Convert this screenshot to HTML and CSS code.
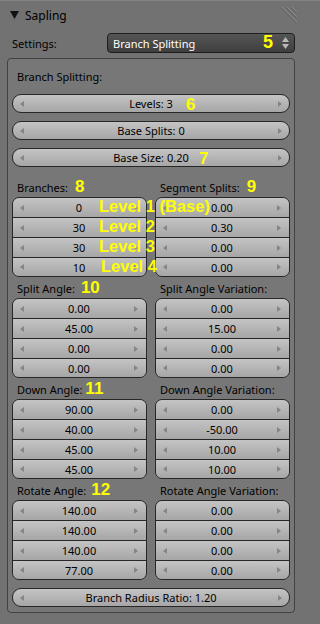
FILE: index.html
```html
<!DOCTYPE html>
<html lang="en">
<head>
    <meta charset="UTF-8">
    <title>Sapling</title>
    <link rel="stylesheet" href="styles.css">
</head>
<body>
<div class="panel">
    <!-- panel header -->
    <div class="head">
        <svg class="tri" viewBox="0 0 9 8"><polygon points="0,0 9,0 4.5,8" fill="#111"/></svg>
        <span class="title">Sapling</span>
        <svg class="grip" viewBox="0 0 16 16">
            <g stroke-width="1">
                <line x1="0" y1="0.5" x2="15.5" y2="16" stroke="#5e5e5e"/>
                <line x1="1" y1="0" x2="16" y2="15" stroke="#8c8c8c"/>
                <line x1="5" y1="0.5" x2="15.5" y2="11" stroke="#5e5e5e"/>
                <line x1="6" y1="0" x2="16" y2="10" stroke="#8c8c8c"/>
                <line x1="10" y1="0.5" x2="15.5" y2="6" stroke="#5e5e5e"/>
                <line x1="11" y1="0" x2="16" y2="5" stroke="#8c8c8c"/>
            </g>
        </svg>
    </div>

    <div class="settings">
        <span class="settings-label">Settings:</span>
        <div class="menu">
            <span>Branch Splitting</span>
            <span class="note note-5">5</span>
            <svg class="updown" viewBox="0 0 7 12">
                <polygon points="0,5 3.5,0 7,5" fill="#b8b8b8"/>
                <polygon points="0,7 3.5,12 7,7" fill="#b8b8b8"/>
            </svg>
        </div>
    </div>

    <div class="box">
        <div class="box-title">Branch Splitting:</div>

        <div class="btn"><i class="arr-l"></i><span class="val">Levels: 3</span><i class="arr-r"></i><span class="note note-6">6</span></div>
        <div class="btn"><i class="arr-l"></i><span class="val">Base Splits: 0</span><i class="arr-r"></i></div>
        <div class="btn"><i class="arr-l"></i><span class="val">Base Size: 0.20</span><i class="arr-r"></i><span class="note note-7">7</span></div>

        <!-- branches / segment splits -->
        <div class="cols first">
            <div class="col">
                <div class="col-label">Branches:<span class="num n8">8</span></div>
                <div class="group">
                    <div class="row"><i class="arr-l"></i><span class="val">0</span><i class="arr-r"></i></div>
                    <div class="row"><i class="arr-l"></i><span class="val">30</span><i class="arr-r"></i></div>
                    <div class="row"><i class="arr-l"></i><span class="val">30</span><i class="arr-r"></i></div>
                    <div class="row"><i class="arr-l"></i><span class="val">10</span><i class="arr-r"></i></div>
                </div>
            </div>
            <div class="col">
                <div class="col-label">Segment Splits:<span class="num n9">9</span></div>
                <div class="group">
                    <div class="row"><i class="arr-l"></i><span class="val">0.00</span><i class="arr-r"></i></div>
                    <div class="row"><i class="arr-l"></i><span class="val">0.30</span><i class="arr-r"></i></div>
                    <div class="row"><i class="arr-l"></i><span class="val">0.00</span><i class="arr-r"></i></div>
                    <div class="row"><i class="arr-l"></i><span class="val">0.00</span><i class="arr-r"></i></div>
                </div>
            </div>
            <div class="levels">Level 1 (Base)<br>Level 2<br>Level 3<br><span class="lv4">Level 4</span></div>
        </div>

        <!-- split angle -->
        <div class="cols">
            <div class="col">
                <div class="col-label">Split Angle:<span class="num n10">10</span></div>
                <div class="group">
                    <div class="row"><i class="arr-l"></i><span class="val">0.00</span><i class="arr-r"></i></div>
                    <div class="row"><i class="arr-l"></i><span class="val">45.00</span><i class="arr-r"></i></div>
                    <div class="row"><i class="arr-l"></i><span class="val">0.00</span><i class="arr-r"></i></div>
                    <div class="row"><i class="arr-l"></i><span class="val">0.00</span><i class="arr-r"></i></div>
                </div>
            </div>
            <div class="col">
                <div class="col-label">Split Angle Variation:</div>
                <div class="group">
                    <div class="row"><i class="arr-l"></i><span class="val">0.00</span><i class="arr-r"></i></div>
                    <div class="row"><i class="arr-l"></i><span class="val">15.00</span><i class="arr-r"></i></div>
                    <div class="row"><i class="arr-l"></i><span class="val">0.00</span><i class="arr-r"></i></div>
                    <div class="row"><i class="arr-l"></i><span class="val">0.00</span><i class="arr-r"></i></div>
                </div>
            </div>
        </div>

        <!-- down angle -->
        <div class="cols">
            <div class="col">
                <div class="col-label">Down Angle:<span class="num n11">11</span></div>
                <div class="group">
                    <div class="row"><i class="arr-l"></i><span class="val">90.00</span><i class="arr-r"></i></div>
                    <div class="row"><i class="arr-l"></i><span class="val">40.00</span><i class="arr-r"></i></div>
                    <div class="row"><i class="arr-l"></i><span class="val">45.00</span><i class="arr-r"></i></div>
                    <div class="row"><i class="arr-l"></i><span class="val">45.00</span><i class="arr-r"></i></div>
                </div>
            </div>
            <div class="col">
                <div class="col-label">Down Angle Variation:</div>
                <div class="group">
                    <div class="row"><i class="arr-l"></i><span class="val">0.00</span><i class="arr-r"></i></div>
                    <div class="row"><i class="arr-l"></i><span class="val">-50.00</span><i class="arr-r"></i></div>
                    <div class="row"><i class="arr-l"></i><span class="val">10.00</span><i class="arr-r"></i></div>
                    <div class="row"><i class="arr-l"></i><span class="val">10.00</span><i class="arr-r"></i></div>
                </div>
            </div>
        </div>

        <!-- rotate angle -->
        <div class="cols">
            <div class="col">
                <div class="col-label">Rotate Angle:<span class="num n12">12</span></div>
                <div class="group">
                    <div class="row"><i class="arr-l"></i><span class="val">140.00</span><i class="arr-r"></i></div>
                    <div class="row"><i class="arr-l"></i><span class="val">140.00</span><i class="arr-r"></i></div>
                    <div class="row"><i class="arr-l"></i><span class="val">140.00</span><i class="arr-r"></i></div>
                    <div class="row"><i class="arr-l"></i><span class="val">77.00</span><i class="arr-r"></i></div>
                </div>
            </div>
            <div class="col">
                <div class="col-label">Rotate Angle Variation:</div>
                <div class="group">
                    <div class="row"><i class="arr-l"></i><span class="val">0.00</span><i class="arr-r"></i></div>
                    <div class="row"><i class="arr-l"></i><span class="val">0.00</span><i class="arr-r"></i></div>
                    <div class="row"><i class="arr-l"></i><span class="val">0.00</span><i class="arr-r"></i></div>
                    <div class="row"><i class="arr-l"></i><span class="val">0.00</span><i class="arr-r"></i></div>
                </div>
            </div>
        </div>

        <div class="btn ratio"><i class="arr-l"></i><span class="val">Branch Radius Ratio: 1.20</span><i class="arr-r"></i></div>
    </div>
</div>
</body>
</html>
```

FILE: styles.css
```css
* {
    margin: 0;
    padding: 0;
    box-sizing: border-box;
}

body {
    width: 320px;
    height: 624px;
    overflow: hidden;
    background: #727272;
    font-family: "Noto Sans", "Open Sans", sans-serif;
    font-size: 11px;
    color: #000;
}

.panel {
    border-top: 1px solid #828282;
}

/* header */
.head {
    height: 28px;
    display: flex;
    align-items: center;
    padding: 0 23px 0 10px;
}

.head .tri {
    width: 9px;
    height: 8px;
}

.head .title {
    font-size: 12px;
    margin-left: 6px;
}

.head .grip {
    width: 16px;
    height: 16px;
    margin-left: auto;
    align-self: flex-start;
    margin-top: 6px;
}

/* settings dropdown */
.settings {
    display: flex;
    align-items: center;
    height: 20px;
    margin: 4px 0 5px;
    padding-left: 12px;
}

.settings-label {
    width: 95px;
}

.menu {
    position: relative;
    width: 188px;
    height: 20px;
    border: 1px solid #1e1e1e;
    border-radius: 4px;
    background: linear-gradient(#555, #3f3f3f);
    color: #fff;
    display: flex;
    align-items: center;
    padding: 0 5px 0 5px;
}

.menu .updown {
    margin-left: auto;
    width: 7px;
    height: 12px;
}

/* box */
.box {
    margin-left: 7px;
    width: 288px;
    border: 1px solid #424242;
    border-radius: 4px;
    background: #777;
    padding: 8px 4px 5px;
}

.box-title {
    height: 19px;
    line-height: 19px;
    padding-left: 5px;
    margin-bottom: 8px;
}

.btn {
    position: relative;
    height: 19px;
    border: 1px solid #272727;
    border-radius: 9px;
    background: linear-gradient(#c4c4c4, #a6a6a6);
    display: flex;
    align-items: center;
    padding: 0 7px;
}

.btn + .btn {
    margin-top: 8px;
}

.btn.ratio {
    margin-top: 8px;
}

.val {
    flex: 1;
    text-align: center;
    white-space: nowrap;
}

.arr-l,
.arr-r {
    width: 0;
    height: 0;
    border-top: 3.5px solid transparent;
    border-bottom: 3.5px solid transparent;
}

.arr-l {
    border-right: 4px solid #858585;
}

.arr-r {
    border-left: 4px solid #858585;
}

/* columns */
.cols {
    position: relative;
    display: grid;
    grid-template-columns: 1fr 1fr;
    column-gap: 8px;
}

.cols.first {
    margin-top: 9px;
}

.col-label {
    height: 21px;
    padding: 4px 0 0 5px;
    line-height: 15px;
    white-space: nowrap;
}

.group {
    border: 1px solid #272727;
    border-radius: 7px;
    overflow: hidden;
}

.row {
    height: 20px;
    border-top: 1px solid #272727;
    background: linear-gradient(#c4c4c4, #a6a6a6);
    display: flex;
    align-items: center;
    padding: 0 8px 0 7px;
}

.row:first-child {
    height: 19px;
    border-top: 0;
}

.row:last-child {
    height: 19px;
}

/* yellow annotations */
.note {
    position: absolute;
    font: bold 17px/17px "Liberation Sans", Arial, sans-serif;
    color: #ff0;
}

.note-5 {
    left: 155px;
    top: -1px;
    font-size: 18px;
    line-height: 18px;
}

.note-6 {
    left: 173px;
    top: 1px;
}

.note-7 {
    left: 186px;
    top: 1px;
}

.num {
    font: bold 17px "Liberation Sans", Arial, sans-serif;
    line-height: 10px;
    color: #ff0;
}

.n8 { margin-left: 7px; }
.n9 { margin-left: 7px; }
.n10 { margin-left: 6px; }
.n11 { margin-left: 3px; }
.n12 { margin-left: 5px; }

.levels {
    position: absolute;
    left: 87px;
    top: 20px;
    font: bold 16.5px/20px "Liberation Sans", Arial, sans-serif;
    color: #ff0;
    white-space: nowrap;
}

.lv4 {
    margin-left: 2px;
}
```
